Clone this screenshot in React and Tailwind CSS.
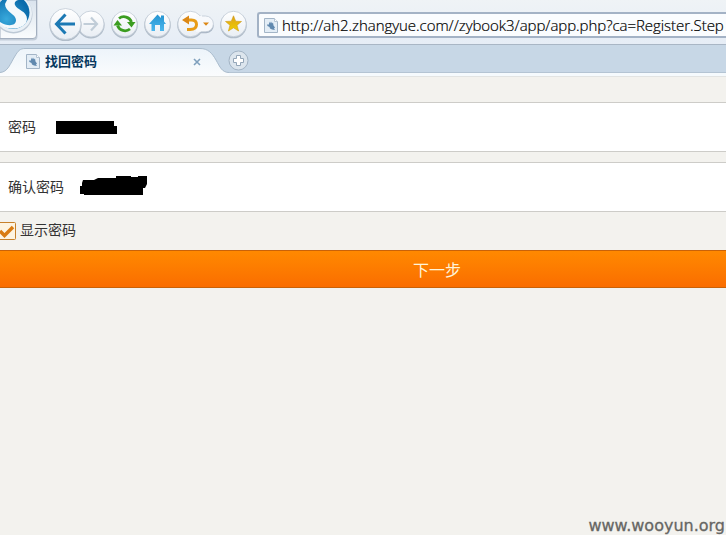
import React from 'react';

function PageIcon() {
  return (
    <svg width="14" height="15" viewBox="0 0 14 15" className="shrink-0">
      <path d="M.5 .5H10.5L13.5 3.5V14.5H.5Z" fill="#e3edf6" stroke="#a3b5c7" />
      <path d="M10.5 .5V3.5H13.5" fill="#fff" stroke="#b5c4d3" />
      <path d="M5 3.500l1 2 1-2 1 2 1-1 .5 3 1.500 2-1 1 1 1.500-3-.5-2-1-.5-1.500-2-1-.5-1.500 2 0Z" fill="#6089af" />
    </svg>
  );
}

function Disc({ cx, r }) {
  return (
    <>
      <circle cx={cx} cy="25" r={r + 0.6} fill="#9dabba" opacity=".75" />
      <circle cx={cx} cy="24" r={r} fill="url(#disc)" stroke="#c0cad5" strokeWidth=".8" />
    </>
  );
}

function Logo() {
  return (
    <svg width="38" height="44" viewBox="0 0 38 44" className="shrink-0">
      <defs>
        <radialGradient id="ball" cx=".3" cy=".7" r=".7">
          <stop offset="0" stopColor="#38a9dc" />
          <stop offset="1" stopColor="#0a6bab" />
        </radialGradient>
        <linearGradient id="plate" x1="0" y1="0" x2="0" y2="1">
          <stop offset="0" stopColor="#d9e3ed" />
          <stop offset="1" stopColor="#fafcfd" />
        </linearGradient>
      </defs>
      <path d="M0 0H37.500V36Q37.500 40.500 33 40.500H0Z" fill="#c2ccd8" />
      <path d="M0 0H36.500V35Q36.500 38.500 33 38.500H0Z" fill="url(#plate)" stroke="#a3afbf" />
      <circle cx="13.500" cy="14.500" r="19" fill="#bdc9d5" />
      <circle cx="13.500" cy="13.500" r="18.500" fill="#e9f0f6" />
      <circle cx="13" cy="12.500" r="16.500" fill="url(#ball)" />
      <path d="M20 0C16 0 14 2 15 5C17 10 27 11 27 19C27 27 15 31 4 27L0 24V22C8 27 16 26 16 20C16 14 5 12 5 4L7 0Z" fill="#f4f9fc" />
    </svg>
  );
}

function NavButtons() {
  return (
    <svg width="210" height="44" viewBox="47 0 210 44" className="shrink-0">
      <defs>
        <linearGradient id="disc" x1="0" y1="0" x2="0" y2="1">
          <stop offset="0" stopColor="#ffffff" />
          <stop offset="1" stopColor="#e9eef4" />
        </linearGradient>
        <linearGradient id="gold" x1="0" y1="0" x2="0" y2="1">
          <stop offset="0" stopColor="#dda018" />
          <stop offset="1" stopColor="#f0d000" />
        </linearGradient>
        <linearGradient id="sky" x1="0" y1="0" x2="0" y2="1">
          <stop offset="0" stopColor="#2493d0" />
          <stop offset="1" stopColor="#4cb7ee" />
        </linearGradient>
      </defs>
      <Disc cx={91} r={13} />
      <Disc cx={65.500} r={15.500} />
      <path d="M75 24H57M65.500 14.500L56.500 24L65.500 33.500" fill="none" stroke="#1c79b4" strokeWidth="3" />
      <path d="M83.500 24H97M91 17.500L97 24L91 30.500" fill="none" stroke="#c1cdd8" strokeWidth="2.200" />
      <Disc cx={124.500} r={12.700} />
      <g fill="none" stroke="#3b9d20" strokeWidth="2.800">
        <path d="M119 18.500A8 8 0 0 1 131.500 22" />
        <path d="M130 29A8 8 0 0 1 117.500 25.500" />
      </g>
      <path d="M127 22H135.500L131.500 27.500ZM113.500 25.500L117.500 20L122 25.500Z" fill="#3b9d20" />
      <Disc cx={157.500} r={12.700} />
      <path d="M149 24L157.500 14.500L161 18V15.500H164V21.500L166 24H164V31H160V25H155V31H151.500V24Z" fill="url(#sky)" />
      <Disc cx={190.500} r={12.700} />
      <path d="M200.500 33.200H206A7.500 7.500 0 0 0 213.700 25L205 20Z" fill="#a8b5c4" />
      <path d="M196 16H205.500A7.800 7.800 0 0 1 205.500 31.800H196Z" fill="#f7f9fc" />
      <path d="M202 16H205.500A7.800 7.800 0 0 1 205.500 31.800H201" fill="none" stroke="#c0cad5" strokeWidth=".8" />
      <path d="M186 20H191.500Q196.500 20 196.500 24.500Q196.500 29.500 190 29.500H187" fill="none" stroke="#e89c16" strokeWidth="3" />
      <path d="M182 20L189 15.500V24.500ZM203 22.500H209L206 25.800Z" fill="#dc8816" />
      <Disc cx={233.500} r={12.700} />
      <path d="M233.500 15.800L235.700 21.200L241.500 21.500L237 25.200L238.600 31L233.500 27.800L228.400 31L230 25.200L225.500 21.500L231.300 21.200Z" fill="url(#gold)" stroke="#d09a16" strokeWidth=".6" />
    </svg>
  );
}

function Toolbar() {
  return (
    <div className="flex h-11 bg-gradient-to-b from-[#eff3f6] to-[#e6edf6]">
      <Logo />
      <div className="w-[9px] shrink-0" />
      <NavButtons />
      <div className="mt-3 flex h-[26px] grow items-center rounded-l-[3px] border-2 border-r-0 border-[#a3b2c5] bg-[#fafcfe] pl-[5px]">
        <PageIcon />
        <span className="ml-[4px] whitespace-nowrap font-['Open_Sans','Noto_Sans',sans-serif] text-[15px] font-light leading-5 tracking-[-0.045px] text-black [-webkit-text-stroke:0.2px_#000]">
          http://ah2.zhangyue.com//zybook3/app/app.php?ca=Register.Step
        </span>
      </div>
    </div>
  );
}

function TabStrip() {
  return (
    <div className="h-8 border-t border-[#a9b6c5] bg-[#c7d7e6]">
      <div className="grid h-full">
        <svg width="726" height="31" viewBox="0 0 726 31" className="col-start-1 row-start-1">
          <defs>
            <linearGradient id="tab" x1="0" y1="0" x2="0" y2="1">
              <stop offset="0" stopColor="#edf4fa" />
              <stop offset="1" stopColor="#fafcfd" />
            </linearGradient>
          </defs>
          <path d="M0 27.500H726" stroke="#b4c4d3" />
          <path d="M0 28H726V31H0Z" fill="#f5fafd" />
          <path d="M0 27.500C8 27 10 19 15 11C18 6 20 3.500 25 3.500H200C208 3.500 212 8 216 15C220 22 222 27.500 229 27.500V31H0Z" fill="url(#tab)" />
          <path d="M0 27.500C8 27 10 19 15 11C18 6 20 3.500 25 3.500H200C208 3.500 212 8 216 15C220 22 222 27.500 229 27.500" fill="none" stroke="#a9bbcc" />
          <path d="M194 14L200 20M200 14L194 20" stroke="#7fa0bd" strokeWidth="1.600" />
          <circle cx="238.500" cy="15.500" r="9.500" fill="#dce5ed" stroke="#a2b3c4" />
          <path d="M236.500 10.500H240.500V13.500H243.500V17.500H240.500V20.500H236.500V17.500H233.500V13.500H236.500Z" fill="#fff" stroke="#94a6b8" />
        </svg>
        <div className="col-start-1 row-start-1 flex items-center pb-[3px] pl-[26px] pt-1">
          <PageIcon />
          <span className="ml-[5px] font-['Noto_Sans_CJK_SC',sans-serif] text-[13px] font-bold leading-4 text-[#07395f]">找回密码</span>
        </div>
      </div>
    </div>
  );
}

export default function App() {
  return (
    <div className="h-[535px] w-[726px] overflow-hidden bg-[#f3f2ee] font-['Noto_Sans_CJK_SC',sans-serif] text-[14px] text-[#333]">
      <Toolbar />
      <TabStrip />
      <main className="flex h-[459px] flex-col border-t border-[#e2e4e3] pt-[25px]">
        <div className="flex h-[50px] items-center border-y border-[#cdccc8] bg-white pl-2">
          <span className="pb-[2px]">密码</span>
          <svg width="61" height="14" viewBox="0 0 61 14" className="ml-5">
            <path d="M0 1H58V6H61V14H0Z" />
          </svg>
        </div>
        <div className="mt-[10px] flex h-[50px] items-center border-y border-[#cdccc8] bg-white pl-2">
          <span className="pb-[2px]">确认密码</span>
          <svg width="68" height="22" viewBox="0 0 68 22" className="ml-4">
            <path d="M0 11H2V8L3 5H14L18 3H36V1H51V2H58V0H67V9L65 13H63V20H4V19H0Z" transform="translate(0 -1)" />
          </svg>
        </div>
        <div className="flex h-[38px] items-center">
          <svg width="16" height="18" viewBox="0 0 16 18" className="shrink-0">
            <path d="M-3 .5H14.500Q15.500 .5 15.500 1.500V16.500Q15.500 17.500 14.500 17.500H-3Z" fill="#fdf4e2" stroke="#c7812c" />
            <path d="M0 9L4.500 13.500L13 5" fill="none" stroke="#d97b12" strokeWidth="3.500" />
          </svg>
          <span className="ml-1 pb-[4px]">显示密码</span>
        </div>
        <button className="h-[38px] w-[874px] shrink-0 border-y border-[#c96208] bg-gradient-to-b from-[#ff8900] to-[#fa6d00] text-center text-[16px] text-[#fff4d9]">
          下一步
        </button>
        <div className="mt-auto pr-px text-right font-['DejaVu_Sans',sans-serif] text-[16px] leading-[18px] text-[#666663] [-webkit-text-stroke:0.3px_#666663]">www.wooyun.org</div>
      </main>
    </div>
  );
}
